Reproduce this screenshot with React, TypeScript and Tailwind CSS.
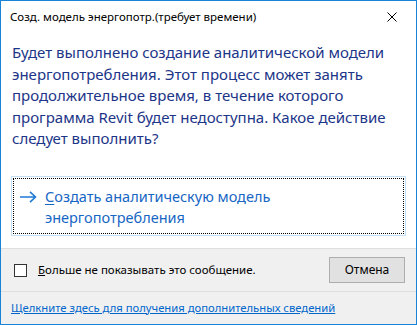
const font = { fontFamily: '"Noto Sans", "Open Sans", sans-serif' }

const App = () => {
  return (
    <div
      style={font}
      className="flex h-[325px] w-[417px] flex-col overflow-hidden border border-[#1883d7] bg-white text-black"
    >
      {/* title bar */}
      <div className="flex h-[31px] items-center justify-between pl-[9px] pr-[19px]">
        <span className="text-[11.5px]">Созд. модель энергопотр.(требует времени)</span>
        <svg width="10" height="10" viewBox="0 0 10 10" className="text-black">
          <path d="M0.5 0.5 L9.5 9.5 M9.5 0.5 L0.5 9.5" stroke="currentColor" strokeWidth="1" />
        </svg>
      </div>

      {/* content */}
      <div className="flex-1 px-[10px] pt-[10px]">
        <p className="pl-px text-[15px] leading-[21.5px] text-[#1c3588]">
          Будет выполнено создание аналитической модели энергопотребления. Этот процесс может занять
          продолжительное время, в течение которого программа Revit будет недоступна. Какое действие
          следует выполнить?
        </p>
        <div className="mt-[26px] border border-[#c5dff5] p-px">
          <div className="flex h-[56px] items-start gap-[8px] border border-dotted border-black pl-[6px] pt-[7px]">
            <svg width="17" height="12" viewBox="0 0 17 12" className="mt-[5px] shrink-0 text-[#1e7ad6]">
              <path d="M0 6 H15.5 M10 0.8 L15.5 6 L10 11.2" fill="none" stroke="currentColor" strokeWidth="1.6" />
            </svg>
            <span className="text-[14.5px] leading-[21px] text-[#1666c4]">
              <span className="underline underline-offset-2">С</span>оздать аналитическую модель
              <br />
              энергопотребления
            </span>
          </div>
        </div>
      </div>

      {/* footer */}
      <div className="border-t border-[#dfdfdf] bg-[#f0f0f0]">
        <div className="flex h-[42px] items-center pl-[13px] pr-[11px]">
          <div className="h-[13px] w-[13px] border border-[#333] bg-white" />
          <span className="ml-[11px] text-[11.5px]">
            <span className="underline">Б</span>ольше не показывать это сообщение.
          </span>
          <button className="ml-auto h-[26px] w-[76px] border border-[#adadad] bg-[#e1e1e1] text-[12px]">
            Отмена
          </button>
        </div>
        <div className="flex h-[33px] items-center border-t border-[#dfdfdf] pl-[10px]">
          <a href="#" className="text-[11.25px] text-[#0066cc] underline">
            Щелкните здесь для получения дополнительных сведений
          </a>
        </div>
      </div>
    </div>
  )
}

export default App
